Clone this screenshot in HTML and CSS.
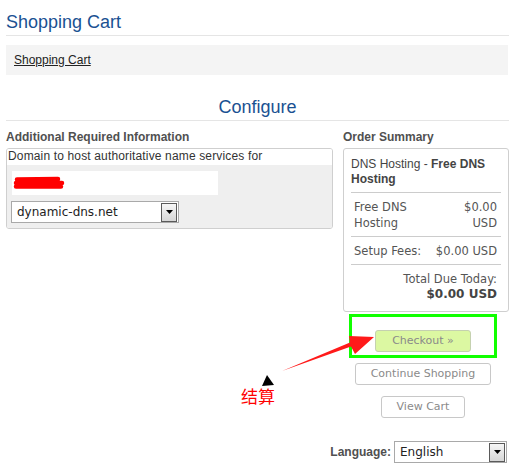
FILE: index.html
```html
<!DOCTYPE html>
<html>
<head>
<meta charset="utf-8">
<title>Shopping Cart</title>
<link rel="stylesheet" href="styles.css">
</head>
<body>
<div class="page">
  <h1 class="title">Shopping Cart</h1>
  <div class="crumb"><a href="#">Shopping Cart</a></div>
  <h2 class="configure">Configure</h2>
  <div class="cols">
    <div class="left">
      <div class="label">Additional Required Information</div>
      <div class="box">
        <div class="field-label">Domain to host authoritative name services for</div>
        <div class="field-body">
          <div class="input">
            <svg class="scribble" width="56" height="16" viewBox="0 0 56 16">
              <path d="M5 4.5 L46 4 M4 8 L50 8 M4 11.5 L49 11.5" stroke="#ff0000" stroke-width="4.5" stroke-linecap="round" fill="none"/>
            </svg>
          </div>
          <div class="select sel-domain">
            <span class="sel-text">dynamic-dns.net</span>
            <span class="drop"><svg width="7" height="4" viewBox="0 0 7 4"><path d="M0 0 H7 L3.5 4 Z" fill="#000"/></svg></span>
          </div>
        </div>
      </div>
    </div>
    <div class="right">
      <div class="label">Order Summary</div>
      <div class="summary">
        <div class="sum-head">DNS Hosting - <b>Free DNS Hosting</b></div>
        <div class="sum-row">
          <span class="sum-left">Free DNS<br>Hosting</span>
          <span class="sum-right">$0.00<br>USD</span>
        </div>
        <div class="sum-row">
          <span class="sum-left">Setup Fees:</span>
          <span class="sum-right">$0.00 USD</span>
        </div>
        <div class="sum-total">
          <div>Total Due Today:</div>
          <div class="total-amt">$0.00 USD</div>
        </div>
      </div>
      <div class="actions">
        <button class="btn checkout">Checkout &raquo;</button>
        <button class="btn">Continue Shopping</button>
        <button class="btn">View Cart</button>
      </div>
    </div>
  </div>
  <div class="lang">
    <span class="lang-label">Language:</span>
    <div class="select sel-lang">
      <span class="sel-text">English</span>
      <span class="drop"><svg width="7" height="4" viewBox="0 0 7 4"><path d="M0 0 H7 L3.5 4 Z" fill="#000"/></svg></span>
    </div>
  </div>
</div>
<svg class="annot" width="518" height="472" viewBox="0 0 518 472">
  <rect x="350.5" y="315.5" width="145" height="41" fill="none" stroke="#11ff00" stroke-width="3"/>
  <polygon points="282,371 351,346.5 355,354 374,337 349,336 350,342.5" fill="#ff1a1a"/>
  <polygon points="267,375 262,386 274,385" fill="#000"/>
</svg>
<div class="note">结算</div>
</body>
</html>
```

FILE: styles.css
```css
html, body {
  margin: 0;
  padding: 0;
  background: #fff;
}
body {
  position: relative;
  width: 518px;
  height: 472px;
  overflow: hidden;
  font-family: "Liberation Sans", Arial, sans-serif;
  font-size: 12px;
  color: #333;
}
.page {
  margin-left: 6px;
  width: 503px;
}
.title {
  margin: 0;
  padding: 12px 0 2px 0;
  font-size: 18px;
  line-height: 21px;
  font-weight: normal;
  color: #1a5192;
  border-bottom: 1px solid #e5e5e5;
}
.crumb {
  margin-top: 9px;
  height: 30px;
  line-height: 31px;
  background: #f4f4f4;
  padding-left: 8px;
  width: 494px;
}
.crumb a {
  color: #222;
  text-decoration: underline;
}
.configure {
  margin: 22px 0 0 0;
  padding-bottom: 2px;
  font-size: 18px;
  line-height: 21px;
  font-weight: normal;
  text-align: center;
  color: #1a5192;
  border-bottom: 1px solid #e5e5e5;
}
.cols {
  display: flex;
  gap: 10px;
  margin-top: 9px;
}
.left {
  width: 327px;
}
.right {
  width: 166px;
}
.label {
  font-weight: bold;
  font-size: 12px;
  line-height: 14px;
  color: #505050;
  margin-bottom: 4px;
}
.box {
  border: 1px solid #cfcfcf;
  border-radius: 3px;
  overflow: hidden;
}
.field-label {
  line-height: 14px;
  padding: 0 1px 2px 1px;
  color: #333;
  background: #fff;
  letter-spacing: 0.15px;
}
.field-body {
  background: #efefef;
  padding: 6px 5px 5px 4px;
}
.input {
  margin-left: 1px;
  width: 206px;
  height: 24px;
  background: #fff;
  margin-bottom: 6px;
  display: flex;
  align-items: center;
}
.scribble {
  display: block;
  margin-left: 0;
}
.select {
  display: flex;
  align-items: center;
  height: 20px;
  border: 1px solid #a9a9a9;
  background: #fff;
  box-sizing: content-box;
}
.sel-domain {
  width: 166px;
}
.sel-text {
  flex: 1;
  font-family: "DejaVu Sans", Verdana, sans-serif;
  font-size: 12px;
  color: #222;
  padding-left: 5px;
  line-height: 21px;
}
.drop {
  width: 14px;
  height: 17px;
  margin-right: 1px;
  border: 1px solid #5a5a5a;
  background: linear-gradient(#f6f6f6, #d6d6d6);
  display: flex;
  align-items: center;
  justify-content: center;
}
.drop svg {
  display: block;
}
.summary {
  border: 1px solid #cfcfcf;
  border-radius: 3px;
  padding: 0 7px;
}
.sum-head {
  padding: 8px 0 5px 0;
  line-height: 15px;
  color: #444;
}
.sum-head b {
  color: #444;
}
.sum-row {
  border-top: 1px solid #cccccc;
  display: flex;
  justify-content: space-between;
  padding: 6px 4px 5px 3px;
  line-height: 16px;
  font-family: "DejaVu Sans", Verdana, sans-serif;
  font-size: 11.5px;
  color: #555;
}
.sum-right {
  text-align: right;
}
.sum-total {
  border-top: 1px solid #cccccc;
  padding: 6px 4px 9px 3px;
  text-align: right;
  line-height: 16px;
  font-family: "DejaVu Sans", Verdana, sans-serif;
  font-size: 11.5px;
  color: #555;
}
.total-amt {
  font-weight: bold;
  font-size: 12px;
  line-height: 15px;
  color: #444;
}
.actions {
  width: 160px;
  margin-top: 18px;
  display: flex;
  flex-direction: column;
  align-items: center;
  gap: 11px;
}
.btn {
  height: 22px;
  padding: 0 15px;
  border: 1px solid #c8c8c8;
  border-radius: 3px;
  background: #fff;
  font-family: "DejaVu Sans", Verdana, sans-serif;
  font-size: 11px;
  color: #8a8a8a;
  line-height: 20px;
  cursor: pointer;
}
.checkout {
  background: #dcf8a2;
  border-color: #c5d1b0;
  padding: 0 16px;
}
.lang {
  margin-top: 23px;
  display: flex;
  justify-content: flex-end;
  align-items: center;
  gap: 3px;
  padding-right: 2px;
}
.lang-label {
  font-weight: bold;
  color: #505050;
}
.sel-lang {
  width: 111px;
}
.annot {
  position: absolute;
  left: 0;
  top: 0;
  pointer-events: none;
}
.note {
  position: absolute;
  left: 241px;
  top: 386px;
  font-family: "Noto Sans CJK SC", sans-serif;
  font-size: 17px;
  line-height: 20px;
  color: #ff0000;
}
```
